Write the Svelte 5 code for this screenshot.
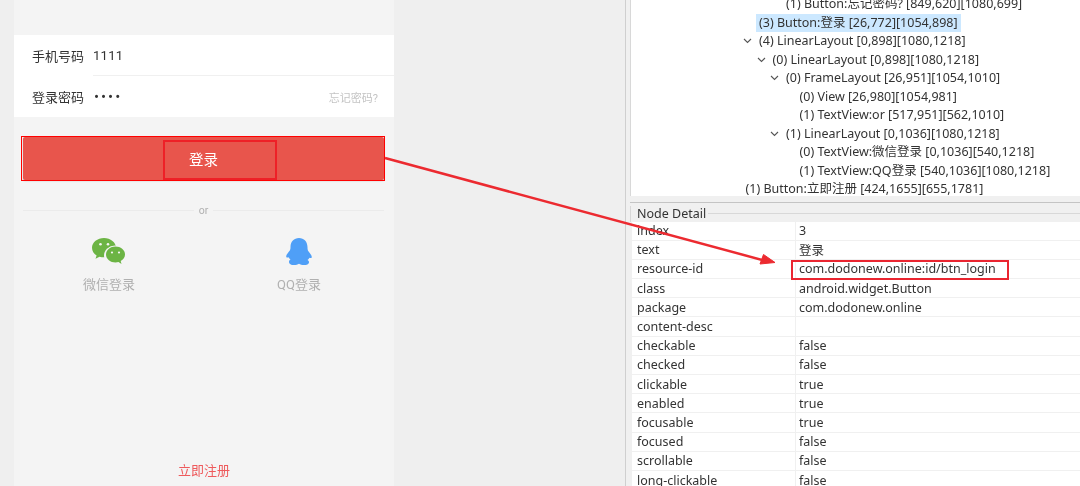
<script>
	const tree = [
		{ depth: 5, open: false, text: '(1) Button:忘记密码? [849,620][1080,699]' },
		{ depth: 3, open: false, text: '(3) Button:登录 [26,772][1054,898]', selected: true },
		{ depth: 3, open: true, text: '(4) LinearLayout [0,898][1080,1218]' },
		{ depth: 4, open: true, text: '(0) LinearLayout [0,898][1080,1218]' },
		{ depth: 5, open: true, text: '(0) FrameLayout [26,951][1054,1010]' },
		{ depth: 6, open: false, text: '(0) View [26,980][1054,981]' },
		{ depth: 6, open: false, text: '(1) TextView:or [517,951][562,1010]' },
		{ depth: 5, open: true, text: '(1) LinearLayout [0,1036][1080,1218]' },
		{ depth: 6, open: false, text: '(0) TextView:微信登录 [0,1036][540,1218]' },
		{ depth: 6, open: false, text: '(1) TextView:QQ登录 [540,1036][1080,1218]' },
		{ depth: 2, open: false, text: '(1) Button:立即注册 [424,1655][655,1781]' }
	];

	const details = [
		['index', '3'],
		['text', '登录'],
		['resource-id', 'com.dodonew.online:id/btn_login'],
		['class', 'android.widget.Button'],
		['package', 'com.dodonew.online'],
		['content-desc', ''],
		['checkable', 'false'],
		['checked', 'false'],
		['clickable', 'true'],
		['enabled', 'true'],
		['focusable', 'true'],
		['focused', 'false'],
		['scrollable', 'false'],
		['long-clickable', 'false']
	];
</script>

<div class="page">
	<!-- Phone screen -->
	<section class="phone">
		<div class="form">
			<div class="field">
				<span class="label">手机号码</span>
				<span class="value">1111</span>
			</div>
			<div class="field">
				<span class="label">登录密码</span>
				<span class="value dots">••••</span>
				<span class="forgot">忘记密码?</span>
			</div>
		</div>

		<div class="login-wrap">
			<button class="login">登录</button>
		</div>

		<div class="or-row">
			<span class="or-line"></span>
			<span class="or">or</span>
			<span class="or-line"></span>
		</div>

		<div class="socials">
			<div class="social">
				<svg width="34" height="27" viewBox="0 0 34 27">
					<path fill="#6cb444" d="M12 0C5.500 0 0 4.300 0 9.800c0 3.200 1.800 5.900 4.600 7.700l-1.100 3.300 4-2.100c1.400.4 2.900.6 4.500.6 6.500 0 12-4.200 12-9.500S18.500 0 12 0z" />
					<ellipse cx="23" cy="17.500" rx="11" ry="10" fill="#f4f4f4" />
					<path fill="#6cb444" d="M23.500 8.500c-5 0-9.500 3.500-9.500 8s4.500 8 9.500 8c1 0 2-.1 3-.4l3 1.900-.8-2.900c2.600-1.500 4.300-3.800 4.300-6.600 0-4.500-4.500-8-9.500-8z" />
					<circle cx="8.500" cy="6.200" r="1.300" fill="#f4f4f4" />
					<circle cx="16" cy="6.200" r="1.300" fill="#f4f4f4" />
					<circle cx="20" cy="14.500" r="1.100" fill="#f4f4f4" />
					<circle cx="27" cy="14.500" r="1.100" fill="#f4f4f4" />
				</svg>
				<span class="social-label">微信登录</span>
			</div>
			<div class="social">
				<svg width="28" height="27" viewBox="0 0 28 27">
					<path fill="#4f9ff7" d="M14 0C9 0 5.500 3.600 5.500 8.800c0 1.300 0 2.400-.5 3.500-1 1.700-3.800 3.900-3.800 6.200 0 1.200 1 1.400 2.300.7.500 1 1.200 1.800 2 2.400-1 .5-1.500 1.300-1.500 2.100C4 26.300 6.500 27 9 27c2 0 3.800-.5 5-1.300 1.200.8 3 1.300 5 1.300 2.500 0 5-.7 5-2.800 0-.8-.5-1.600-1.500-2.100.8-.6 1.500-1.400 2-2.400 1.300.7 2.300.5 2.300-.7 0-2.300-2.800-4.500-3.800-6.200-.5-1.100-.5-2.200-.5-3.500C22.500 3.600 19 0 14 0z" />
				</svg>
				<span class="social-label">QQ登录</span>
			</div>
		</div>

		<div class="spacer"></div>
		<div class="register">立即注册</div>
	</section>

	<div class="gutter"></div>

	<!-- uiautomatorviewer panels -->
	<section class="viewer">
		<div class="tree">
			{#each tree as node}
				<div class="tree-row" style="padding-left: {node.depth * 13.5 + 83.5}px">
					<span class="caret">
						{#if node.open}
							<svg width="9" height="6" viewBox="0 0 9 6"><path d="M1 1l3.500 3.500L8 1" fill="none" stroke="#555" stroke-width="1.100" /></svg>
						{/if}
					</span>
					<span class="node-text" class:selected={node.selected}>{node.text}</span>
				</div>
			{/each}
		</div>

		<div class="detail">
			<div class="detail-title">Node Detail</div>
			<div class="detail-table">
				{#each details as [key, value]}
					<div class="detail-row">
						<span class="key">{key}</span>
						<span class="val">{value}</span>
					</div>
				{/each}
			</div>
		</div>
	</section>

	<!-- Annotations over the screenshot -->
	<div class="mark mark-btn"></div>
	<div class="mark mark-text"></div>
	<div class="mark mark-id"></div>
	<svg class="arrow" width="1080" height="486" viewBox="0 0 1080 486">
		<path d="M385 158L766 261" stroke="#ec2a30" stroke-width="2.500" fill="none" />
		<path d="M775 262.500L760 264L763.500 254.500z" fill="#ec2a30" stroke="#ec2a30" stroke-width="1" />
	</svg>
</div>

<style>
	:global(body) {
		margin: 0;
		background: #efefef;
	}

	.page {
		position: relative;
		display: flex;
		width: 1080px;
		height: 486px;
		overflow: hidden;
		background: #efefef;
		font-family: "Noto Sans", "Noto Sans CJK SC", sans-serif;
		filter: blur(0.35px);
	}

	/* Phone screen */
	.phone {
		width: 380px;
		margin-left: 14px;
		padding-top: 35px;
		box-sizing: border-box;
		display: flex;
		flex-direction: column;
		background: #f4f4f4;
		font-family: "Roboto", "Noto Sans CJK SC", sans-serif;
	}

	.form {
		background: #fff;
		height: 82px;
	}

	.field {
		height: 41px;
		display: flex;
		align-items: center;
		padding: 0 16px 0 18px;
		box-sizing: border-box;
		position: relative;
		font-size: 13px;
		color: #333;
	}

	.field:first-child::after {
		content: "";
		position: absolute;
		left: 79px;
		right: 0;
		bottom: 0;
		height: 1px;
		background: #f0f0f0;
	}

	.label {
		width: 61px;
	}

	.value {
		letter-spacing: 0.3px;
	}

	.dots {
		letter-spacing: 2px;
		font-size: 15px;
		margin-left: 1px;
	}

	.forgot {
		margin-left: auto;
		font-size: 11px;
		color: #c4c4c4;
	}

	.login-wrap {
		padding: 20px 10px 0 9px;
	}

	.login {
		display: block;
		width: 100%;
		height: 43px;
		padding: 0;
		border: 0;
		border-radius: 2px;
		background: #e8554c;
		box-shadow: 0 1px 2px rgba(0, 0, 0, 0.2);
		color: #fff;
		font: inherit;
		font-size: 14.500px;
	}

	.or-row {
		display: flex;
		align-items: center;
		gap: 5px;
		margin: 20px 10px 0 9px;
		height: 20px;
		font-size: 10.500px;
		color: #b0b0b0;
	}

	.or-line {
		flex: 1;
		height: 1px;
		background: #ebebeb;
	}

	.socials {
		display: flex;
		margin-top: 18px;
	}

	.social {
		flex: 1;
		display: flex;
		flex-direction: column;
		align-items: center;
		gap: 9px;
		font-size: 13px;
		color: #b0b0b0;
	}

	.social svg {
		display: block;
	}

	.spacer {
		flex: 1;
	}

	.register {
		text-align: center;
		font-size: 13px;
		color: #ee5a5c;
		padding-bottom: 7px;
	}

	.gutter {
		width: 231px;
	}

	/* Viewer panels */
	.viewer {
		flex: 1;
		display: flex;
		flex-direction: column;
		border-left: 1px solid #cfcfcf;
		padding-left: 4px;
		background: #f0f0f0;
		font-size: 12.500px;
		color: #333;
	}

	.tree {
		height: 201px;
		margin-top: -5px;
		padding-left: 1px;
		box-sizing: border-box;
		background: #fff;
		overflow: hidden;
		border-left: 1px solid #d8d8d8;
	}

	.tree-row {
		display: flex;
		align-items: center;
		height: 18.500px;
		white-space: nowrap;
	}

	.caret {
		width: 13px;
		flex: none;
		margin-left: -13px;
		display: flex;
	}

	.node-text {
		padding: 0 3px;
		line-height: 18px;
	}

	.selected {
		background: #cce8ff;
	}

	.detail {
		flex: 1;
		margin-top: 6px;
		padding-top: 3px;
		border-top: 1px solid #c4c4c4;
		overflow: hidden;
	}

	.detail-title {
		display: flex;
		align-items: center;
		gap: 2px;
		height: 15.500px;
		padding-left: 6px;
		line-height: 14px;
		border-left: 1px solid #d8d8d8;
	}

	.detail-title::after {
		content: "";
		flex: 1;
		height: 1px;
		background: #d8d8d8;
	}

	.detail-table {
		background: #fff;
		margin-left: 2px;
	}

	.detail-row {
		display: flex;
		height: 19.200px;
		box-sizing: border-box;
		align-items: center;
		border-bottom: 1px solid #f0f0f0;
		white-space: nowrap;
	}

	.key {
		width: 164px;
		flex: none;
		padding-left: 5px;
		box-sizing: border-box;
		border-right: 1px solid #f0f0f0;
		align-self: stretch;
		display: flex;
		align-items: center;
	}

	.val {
		padding-left: 3px;
	}

	/* Annotations */
	.mark {
		position: absolute;
		box-sizing: border-box;
		pointer-events: none;
	}

	.mark-btn {
		left: 21px;
		top: 136px;
		width: 364px;
		height: 45px;
		border: 1px solid #f00;
	}

	.mark-text {
		left: 163px;
		top: 140px;
		width: 114px;
		height: 40px;
		border: 2px solid #ee2027;
	}

	.mark-id {
		left: 791px;
		top: 260px;
		width: 218px;
		height: 20px;
		border: 2px solid #ea2530;
	}

	.arrow {
		position: absolute;
		left: 0;
		top: 0;
		pointer-events: none;
	}
</style>
